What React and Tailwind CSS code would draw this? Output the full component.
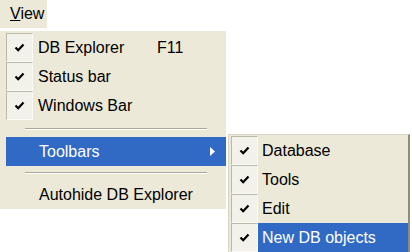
const Check = () => (
  <svg width="11" height="9" viewBox="0 0 11 9" className="block">
    <path d="M1.5 4.5 L4.2 7.2 L9.5 1.5" fill="none" stroke="#000" strokeWidth="2.2" />
  </svg>
);

const CheckBox = () => (
  <div className="w-[27px] h-[29px] shrink-0 flex items-center justify-center border border-[#bdb9a8] border-r-[#fbfaf6] border-b-[#fbfaf6] bg-[#f3f2ea]">
    <Check />
  </div>
);

const Separator = ({ h }) => (
  <div className={`${h} flex items-center pl-[19px] pr-[19px]`}>
    <div className="w-full border-t border-[#aca899] border-b border-b-white" />
  </div>
);

const MenuRow = ({ label, shortcut }) => (
  <div className="h-[29px] flex items-center">
    <CheckBox />
    <span className="ml-[5px] w-[119px]">{label}</span>
    {shortcut && <span>{shortcut}</span>}
  </div>
);

const SubRow = ({ label, active }) => (
  <div className="h-[29px] flex items-center">
    <CheckBox />
    <div
      className={`flex-1 h-full flex items-center pl-[4px] ${active ? 'bg-[#316ac5] text-white' : ''}`}
    >
      {label}
    </div>
  </div>
);

export default function App() {
  return (
    <div
      className="relative w-[412px] h-[252px] bg-white overflow-hidden text-[16px] text-black"
      style={{ fontFamily: '"Liberation Sans", Arial, sans-serif' }}
    >
      <div className="w-[47px] h-[28px] bg-[#ece9d8] flex items-center pl-[10px]">
        <span>
          <span className="underline">V</span>iew
        </span>
      </div>

      <div className="mt-[3px] w-[226px] h-[178px] bg-[#ece9d8] pl-[6px] pt-[2px]">
        <MenuRow label="DB Explorer" shortcut="F11" />
        <MenuRow label="Status bar" />
        <MenuRow label="Windows Bar" />
        <Separator h="h-[17px]" />
        <div className="h-[29px] flex items-center bg-[#316ac5] text-white pl-[33px] pr-[11px]">
          <span className="flex-1">Toolbars</span>
          <svg width="5" height="9" viewBox="0 0 5 9">
            <path d="M0 0 L5 4.5 L0 9 Z" fill="#fff" />
          </svg>
        </div>
        <Separator h="h-[14px]" />
        <div className="h-[29px] flex items-center pl-[33px]">Autohide DB Explorer</div>
      </div>

      <div className="absolute left-[228px] top-[134px] w-[182px] h-[120px] bg-[#ece9d8] border-l border-t border-[#d8d5c6] border-r-2 border-r-[#8f8c7f] pl-[2px] pt-[1px]">
        <SubRow label="Database" />
        <SubRow label="Tools" />
        <SubRow label="Edit" />
        <SubRow label="New DB objects" active />
      </div>
    </div>
  );
}
